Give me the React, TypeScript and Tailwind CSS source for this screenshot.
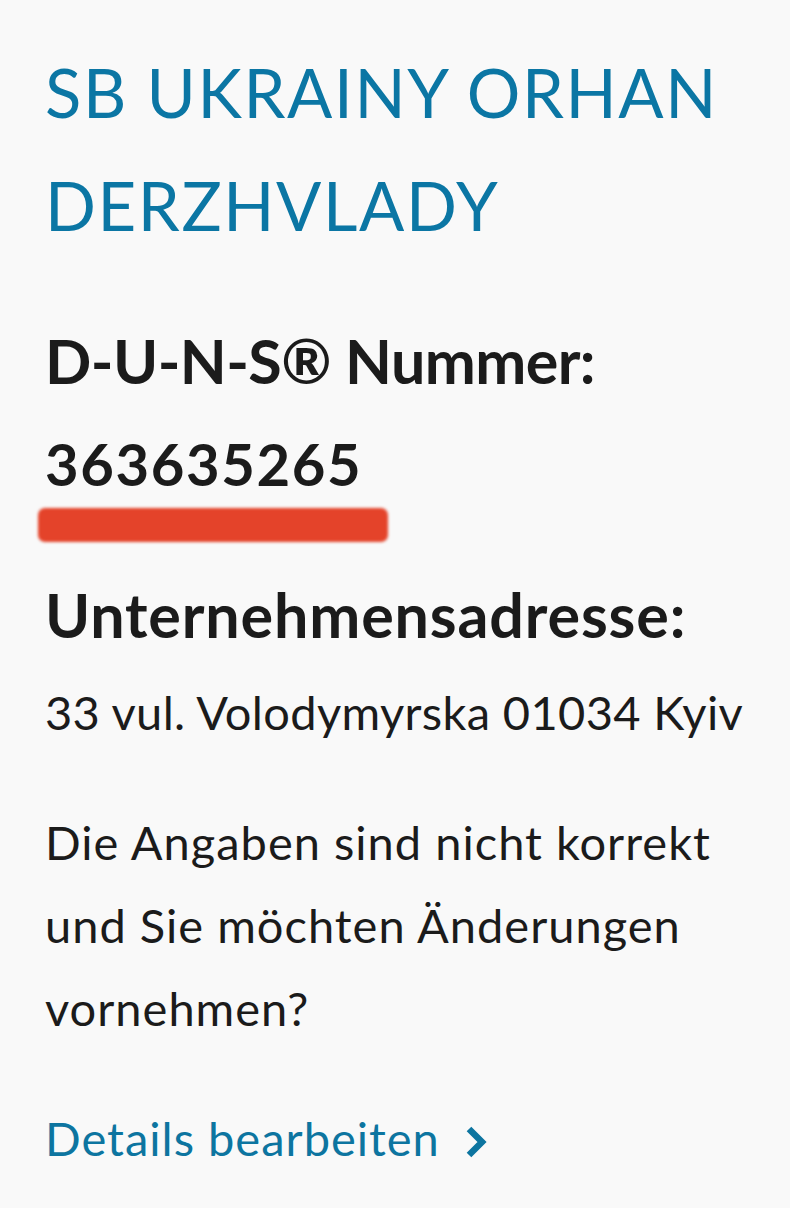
export default function App() {
  return (
    <div
      className="min-h-screen bg-[#f9f9f9] pl-[45px] pr-[20px] pt-[36px] text-[#1b1b1b]"
      style={{ fontFamily: 'Lato, "Open Sans", sans-serif' }}
    >
      {/* Company name */}
      <h1 className="text-[67px] font-normal leading-[113px] tracking-[1.6px] text-[#0b76a4]">
        SB UKRAINY ORHAN
        <br />
        DERZHVLADY
      </h1>

      {/* DUNS */}
      <div className="mt-[47px]">
        <h2 className="text-[61px] font-bold leading-[103px] tracking-[-0.6px]">D-U-N-S® Nummer:</h2>
        <p className="text-[58px] font-bold leading-[103px] tracking-[1.6px]">363635265</p>
        <div className="-ml-[7px] -mt-[7px] h-[34px] w-[350px] rounded-[7px] bg-[#e4432a] blur-[1.5px]"></div>
      </div>

      {/* Address */}
      <div className="mt-[21px]">
        <h2 className="text-[61px] font-bold leading-[103px] tracking-[0.85px]">Unternehmensadresse:</h2>
        <p className="mt-[5px] text-[47px] leading-[83px] tracking-[0.35px]">33 vul. Volodymyrska 01034 Kyiv</p>
      </div>

      <p className="mt-[47px] text-[47px] leading-[83px] tracking-[1px]">
        Die Angaben sind nicht korrekt
        <br />
        und Sie möchten Änderungen
        <br />
        vornehmen?
      </p>

      <a href="#" className="mt-[47px] flex items-center gap-[24px] text-[47px] leading-[83px] tracking-[1px] text-[#0d75a0]">
        Details bearbeiten
        <svg width="24" height="34" viewBox="0 0 24 34" fill="none" className="mt-[6px]">
          <polyline points="5,4 18,17 5,30" stroke="currentColor" strokeWidth="6.5" strokeLinecap="butt" strokeLinejoin="miter" />
        </svg>
      </a>
    </div>
  );
}
